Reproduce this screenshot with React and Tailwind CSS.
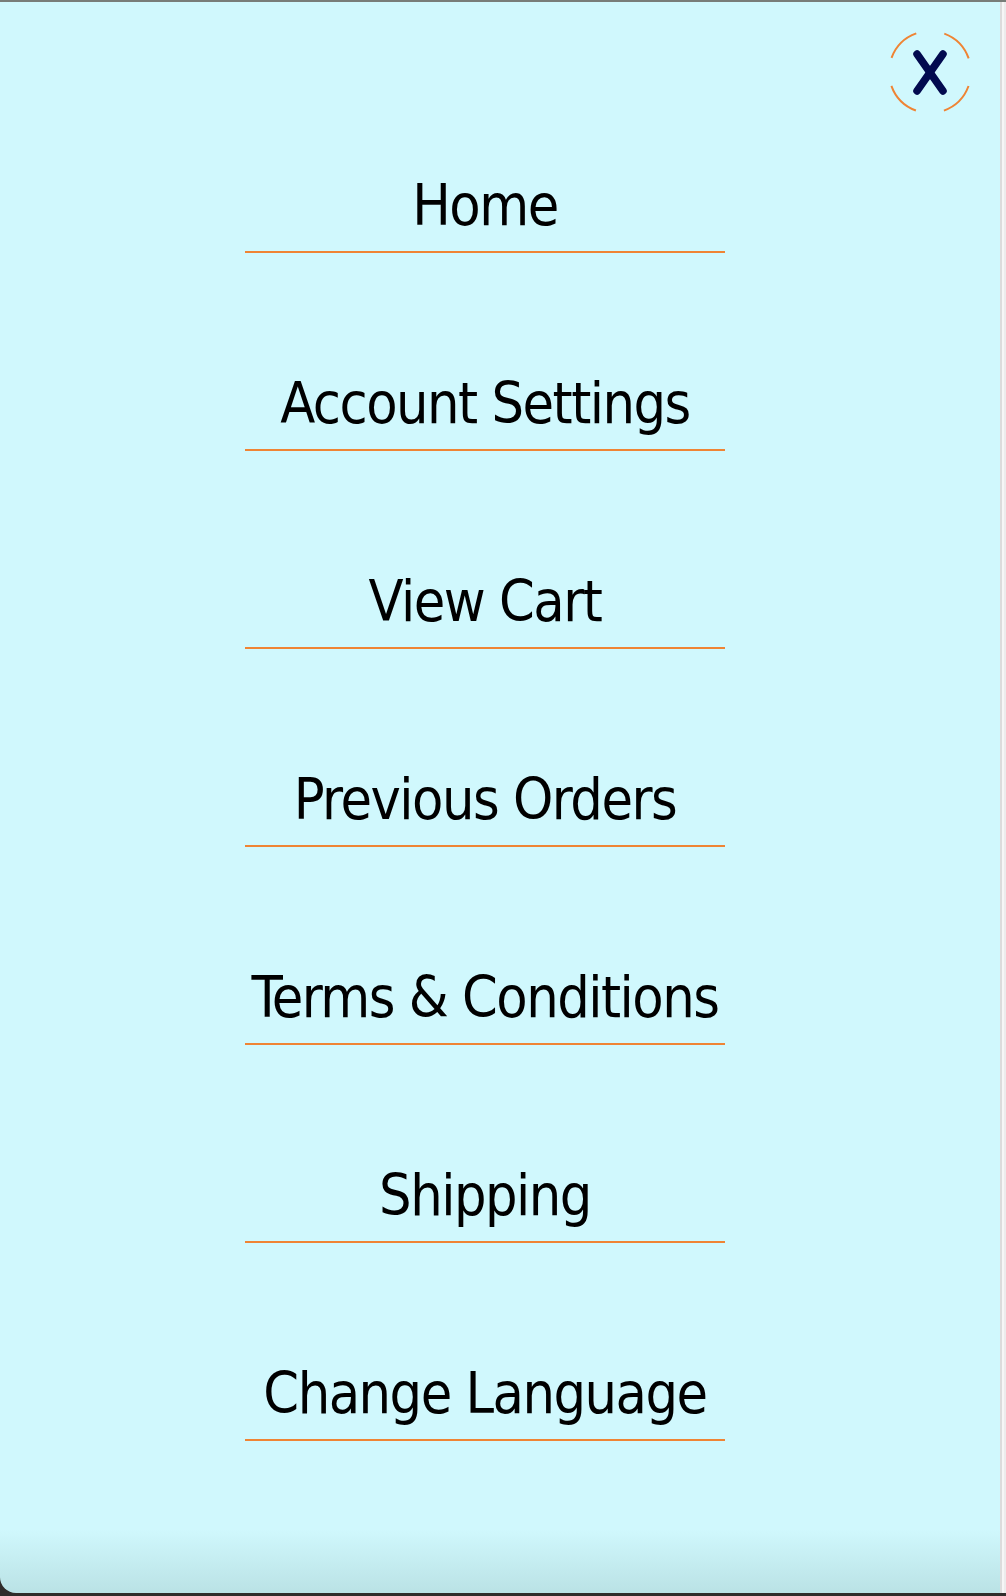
import { useState } from 'react';

const links = [
  'Home',
  'Account Settings',
  'View Cart',
  'Previous Orders',
  'Terms & Conditions',
  'Shipping',
  'Change Language',
];

const CloseButton = ({ onClick }) => (
  <button onClick={onClick} aria-label="Close menu" className="w-[84px] h-[84px] block">
    <svg width="84" height="84" viewBox="0 0 84 84" fill="none">
      <circle
        cx="42"
        cy="42"
        r="41"
        stroke="#ef8434"
        strokeWidth="2"
        strokeDasharray="35.8 28.6"
        strokeDashoffset="-14.3"
      />
      <g stroke="#020a4f" strokeWidth="7.5" strokeLinecap="round">
        <line x1="29" y1="24" x2="55" y2="61" />
        <line x1="55" y1="24" x2="29" y2="61" />
      </g>
    </svg>
  </button>
);

const App = () => {
  const [active, setActive] = useState('Home');

  return (
    <div className="w-full h-[1596px] flex flex-col bg-[#2f2c2a]">
      <div className="h-[2px] bg-[#787d78]" />
      <div className="flex h-[1591px]">
        <div className="w-[1000px] h-full rounded-bl-[16px] bg-[linear-gradient(to_bottom,#d0f8fd_96%,#bae2e5)] pt-[28px] font-['DejaVu_Sans_Condensed',sans-serif]">
          <div className="flex justify-end pr-[28px]">
            <CloseButton onClick={() => setActive('Home')} />
          </div>
          <nav className="flex justify-center pr-[30px] mt-[62.8px]">
            <ul className="w-[480px] flex flex-col gap-[122.1px]">
              {links.map((item) => (
                <li key={item}>
                  <a
                    href="#"
                    onClick={(e) => {
                      e.preventDefault();
                      setActive(item);
                    }}
                    aria-current={active === item ? 'page' : undefined}
                    className="block whitespace-nowrap text-center text-[57px] leading-[57px] tracking-[-1.5px] pb-[16.9px] border-b-2 border-[#ef8434] text-black"
                  >
                    {item}
                  </a>
                </li>
              ))}
            </ul>
          </nav>
        </div>
        <div className="w-[6px] h-full flex bg-[#ececec]">
          <div className="w-[2px] bg-[#dcdcdc]" />
          <div className="w-[2px] bg-[#f6f6f6]" />
        </div>
      </div>
    </div>
  );
};

export default App;
